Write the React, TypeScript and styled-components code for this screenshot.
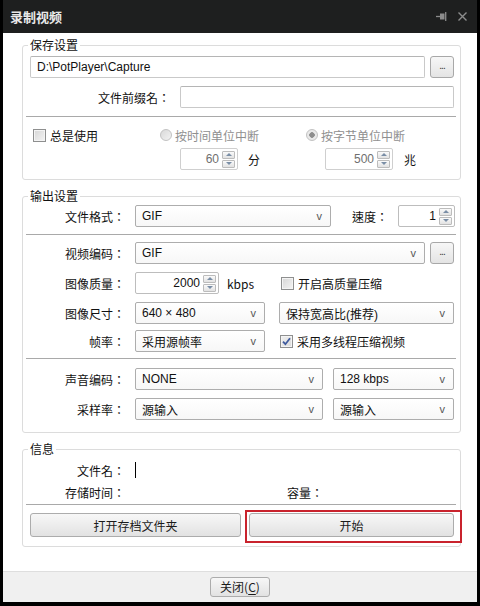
import styled, { createGlobalStyle } from 'styled-components'

const GlobalStyle = createGlobalStyle`
	html, body {
		margin: 0;
		padding: 0;
		background: #000;
	}
	body {
		font-family: "Noto Sans CJK SC", "Noto Sans", sans-serif;
		font-size: 12px;
		color: #1b1b1b;
	}
`

const Window = styled.div`
	width: 474px;
	height: 602px;
	margin-left: 3px;
	display: flex;
	flex-direction: column;
	background: #fff;
`

const TitleBar = styled.div`
	flex: none;
	height: 33px;
	display: flex;
	align-items: center;
	padding: 0 10px 0 7px;
	background: #1e1f1f;
	color: #e8e8e8;
	font-size: 13px;
	font-weight: bold;
`

const Title = styled.span`
	flex: 1;
`

const TitleIcons = styled.div`
	display: flex;
	align-items: center;
	gap: 11px;
	color: #8c8c8c;
	svg {
		display: block;
	}
`

const Body = styled.div`
	flex: 1;
	display: flex;
	flex-direction: column;
	padding: 12px 16px 0 19px;
`

const Group = styled.div<{ $mt?: number; $pt: number; $pb: number }>`
	position: relative;
	display: flex;
	flex-direction: column;
	margin-top: ${(p) => p.$mt ?? 0}px;
	padding: ${(p) => p.$pt}px 6px ${(p) => p.$pb}px 7px;
	border: 1px solid #dcdcdc;
	border-radius: 3px;
`

const Legend = styled.span`
	position: absolute;
	top: -9px;
	left: 5px;
	padding: 0 2px;
	background: #fff;
	line-height: 16px;
	color: #111;
`

const Separator = styled.div<{ $mt: number }>`
	height: 1px;
	margin: ${(p) => p.$mt}px -2px 0 -4px;
	background: #a9a9a9;
`

const Row = styled.div<{ $mt?: number; $h?: number }>`
	display: flex;
	align-items: center;
	height: ${(p) => p.$h ?? 22}px;
	margin-top: ${(p) => p.$mt ?? 0}px;
`

const ChoiceRow = styled(Row)`
	display: grid;
	grid-template-columns: 130px 146px 1fr;
	align-items: center;
`

// TC metrics keep the full-width colon centred in its cell
const Label = styled.span<{ $w: number }>`
	flex: none;
	width: ${(p) => p.$w}px;
	margin-right: 10px;
	text-align: right;
	white-space: nowrap;
	color: #111;
	font-family: "Noto Sans CJK TC", "Noto Sans CJK SC", sans-serif;
`

const Field = styled.div<{ $w?: number }>`
	box-sizing: border-box;
	height: 22px;
	${(p) => (p.$w ? `width: ${p.$w}px; flex: none;` : 'flex: 1;')}
	display: flex;
	align-items: center;
	padding: 0 6px;
	border: 1px solid #c9c9c9;
	border-top-color: #b5b5b5;
	border-radius: 2px;
	background: #fff;
	color: #111;
	font-family: "Liberation Sans", "Noto Sans CJK SC", sans-serif;
	white-space: nowrap;
`

const SelectBox = styled(Field)`
	justify-content: space-between;
	padding-right: 8px;
	border-color: #adadad;
	background: linear-gradient(#ffffff, #f7f7f7);
`

const Chevron = styled.span`
	font-family: "Liberation Sans", sans-serif;
	font-size: 11px;
	color: #555;
`

const SmallButton = styled.button`
	flex: none;
	box-sizing: border-box;
	width: 24px;
	height: 22px;
	margin-left: 5px;
	padding: 0 0 4px;
	border: 1px solid #a8a8a8;
	border-radius: 3px;
	background: linear-gradient(#f7f7f7, #e4e4e4);
	font-family: "Liberation Sans", sans-serif;
	font-size: 10px;
	color: #333;
	letter-spacing: -1px;
`

const PushButton = styled.button<{ $w?: number }>`
	box-sizing: border-box;
	height: 24px;
	${(p) => (p.$w ? `width: ${p.$w}px; flex: none;` : 'flex: 1;')}
	border: 1px solid #acacac;
	border-radius: 3px;
	background: linear-gradient(#f7f7f7, #e2e2e2);
	font-family: "Noto Sans CJK SC", sans-serif;
	font-size: 12px;
	color: #1b1b1b;
`

const Highlight = styled.div`
	position: relative;
	flex: 1;
	display: flex;
	margin-left: 8px;
`

const HighlightFrame = styled.span`
	position: absolute;
	inset: -3px -8px -6px -4px;
	border: 2px solid #c9232d;
	pointer-events: none;
`

const SpinBox = styled.div<{ $w: number; $disabled?: boolean }>`
	box-sizing: border-box;
	flex: none;
	width: ${(p) => p.$w}px;
	height: 22px;
	display: flex;
	align-items: center;
	padding: 0 2px 0 4px;
	border: 1px solid ${(p) => (p.$disabled ? '#cfcfcf' : '#bdbdbd')};
	border-radius: 2px;
	background: #fff;
	font-family: "Liberation Sans", sans-serif;
	color: ${(p) => (p.$disabled ? '#6f6f6f' : '#111')};
`

const SpinValue = styled.span`
	flex: 1;
	text-align: right;
	padding-right: 3px;
`

const SpinArrows = styled.div`
	display: flex;
	flex-direction: column;
	gap: 1px;
`

const SpinArrow = styled.span<{ $down?: boolean }>`
	box-sizing: border-box;
	width: 13px;
	height: 8px;
	display: flex;
	align-items: center;
	justify-content: center;
	border: 1px solid #bcbcbc;
	border-radius: 1px;
	background: linear-gradient(#fafafa, #e2e2e2);
	&::after {
		content: '';
		border-left: 3px solid transparent;
		border-right: 3px solid transparent;
		${(p) => (p.$down ? 'border-top: 3px solid #7a8ea6;' : 'border-bottom: 3px solid #7a8ea6;')}
	}
`

const Check = styled.span<{ $checked?: boolean }>`
	box-sizing: border-box;
	flex: none;
	width: 13px;
	height: 13px;
	margin-right: 4px;
	border: 1px solid #8e8f8f;
	background: ${(p) =>
		p.$checked ? 'linear-gradient(135deg, #f0f0f0, #dadada)' : 'linear-gradient(135deg, #d6d6d6, #f4f4f4)'};
	box-shadow: inset 0 0 0 1px #f4f4f4;
	display: flex;
	align-items: center;
	justify-content: center;
`

const Radio = styled.span<{ $on?: boolean }>`
	box-sizing: border-box;
	flex: none;
	width: 12px;
	height: 12px;
	margin-right: 3px;
	border-radius: 50%;
	border: 1px solid #c2c2c2;
	background: ${(p) =>
		p.$on
			? 'radial-gradient(circle, #8e8e8e 0 2.5px, #e9e9e9 3px)'
			: 'linear-gradient(135deg, #d9d9d9, #f3f3f3)'};
`

const Option = styled.label<{ $disabled?: boolean; $indent?: number }>`
	display: flex;
	align-items: center;
	margin-left: ${(p) => p.$indent ?? 0}px;
	color: ${(p) => (p.$disabled ? '#8f8f8f' : '#111')};
	white-space: nowrap;
`

const Cell = styled.div<{ $indent: number }>`
	display: flex;
	align-items: center;
	padding-left: ${(p) => p.$indent}px;
`

const Unit = styled.span<{ $ml: number }>`
	margin-left: ${(p) => p.$ml}px;
	color: #111;
`

const Caret = styled.span`
	width: 1px;
	height: 16px;
	background: #000;
`

const Spacer = styled.span<{ $w: number }>`
	flex: none;
	width: ${(p) => p.$w}px;
`

const Footer = styled.div`
	flex: none;
	height: 30px;
	display: flex;
	align-items: center;
	justify-content: center;
	border-top: 1px solid #dedede;
	background: #f0f0f0;
`

const CloseButton = styled(PushButton)`
	height: 20px;
	padding: 0;
	line-height: 16px;
	u {
		text-underline-offset: 2px;
	}
`

const Select = ({ value, w }: { value: string; w?: number }) => (
	<SelectBox $w={w}>
		<span>{value}</span>
		<Chevron>v</Chevron>
	</SelectBox>
)

const Spin = ({ value, w, disabled }: { value: string; w: number; disabled?: boolean }) => (
	<SpinBox $w={w} $disabled={disabled}>
		<SpinValue>{value}</SpinValue>
		<SpinArrows>
			<SpinArrow />
			<SpinArrow $down />
		</SpinArrows>
	</SpinBox>
)

const CheckMark = () => (
	<svg width="9" height="9" viewBox="0 0 9 9">
		<path d="M1 4.6 L3.4 7.2 L8 1.2" fill="none" stroke="#3f5b9e" strokeWidth="1.8" />
	</svg>
)

const PinIcon = () => (
	<svg width="11" height="9" viewBox="0 0 11 9">
		<path d="M0 4.5 H4" stroke="currentColor" strokeWidth="1.3" />
		<path d="M4 1.5 H8.5 V7.5 H4 Z" fill="currentColor" />
		<path d="M9.7 0 V9" stroke="currentColor" strokeWidth="1.3" />
	</svg>
)

const CloseIcon = () => (
	<svg width="9" height="9" viewBox="0 0 9 9">
		<path d="M0.5 0.5 L8.5 8.5 M8.5 0.5 L0.5 8.5" stroke="currentColor" strokeWidth="1.4" />
	</svg>
)

export default function App() {
	return (
		<>
			<GlobalStyle />
			<Window>
				<TitleBar>
					<Title>录制视频</Title>
					<TitleIcons>
						<PinIcon />
						<CloseIcon />
					</TitleIcons>
				</TitleBar>
				<Body>
					<Group $pt={10} $pb={9}>
						<Legend>保存设置</Legend>
						<Row>
							<Field>{'D:\\PotPlayer\\Capture'}</Field>
							<SmallButton>...</SmallButton>
						</Row>
						<Row $mt={8}>
							<Label $w={140}>文件前缀名：</Label>
							<Field />
						</Row>
						<Separator $mt={8} />
						<ChoiceRow $mt={9} $h={18}>
							<Option $indent={3}>
								<Check />
								总是使用
							</Option>
							<Option $disabled>
								<Radio />
								按时间单位中断
							</Option>
							<Option $disabled>
								<Radio $on />
								按字节单位中断
							</Option>
						</ChoiceRow>
						<ChoiceRow $mt={4}>
							<span />
							<Cell $indent={20}>
								<Spin value="60" w={58} disabled />
								<Unit $ml={10}>分</Unit>
							</Cell>
							<Cell $indent={19}>
								<Spin value="500" w={68} disabled />
								<Unit $ml={11}>兆</Unit>
							</Cell>
						</ChoiceRow>
					</Group>

					<Group $mt={16} $pt={8} $pb={12}>
						<Legend>输出设置</Legend>
						<Row>
							<Label $w={95}>文件格式：</Label>
							<Select value="GIF" w={196} />
							<Label $w={57}>速度：</Label>
							<Spin value="1" w={57} />
						</Row>
						<Separator $mt={7} />
						<Row $mt={7}>
							<Label $w={95}>视频编码：</Label>
							<Select value="GIF" />
							<SmallButton>...</SmallButton>
						</Row>
						<Row $mt={8}>
							<Label $w={95}>图像质量：</Label>
							<Spin value="2000" w={84} />
							<Unit $ml={8}>kbps</Unit>
							<Option $indent={27}>
								<Check />
								开启高质量压缩
							</Option>
						</Row>
						<Row $mt={8}>
							<Label $w={95}>图像尺寸：</Label>
							<Select value="640 × 480" w={130} />
							<Spacer $w={14} />
							<Select value="保持宽高比(推荐)" />
						</Row>
						<Row $mt={6}>
							<Label $w={95}>帧率：</Label>
							<Select value="采用源帧率" w={130} />
							<Option $indent={15}>
								<Check $checked>
									<CheckMark />
								</Check>
								采用多线程压缩视频
							</Option>
						</Row>
						<Separator $mt={6} />
						<Row $mt={9}>
							<Label $w={95}>声音编码：</Label>
							<Select value="NONE" w={188} />
							<Spacer $w={10} />
							<Select value="128 kbps" />
						</Row>
						<Row $mt={8}>
							<Label $w={95}>采样率：</Label>
							<Select value="源输入" w={188} />
							<Spacer $w={10} />
							<Select value="源输入" />
						</Row>
					</Group>

					<Group $mt={16} $pt={11} $pb={9}>
						<Legend>信息</Legend>
						<Row $h={18}>
							<Label $w={95}>文件名：</Label>
							<Caret />
						</Row>
						<Row $mt={4} $h={18}>
							<Label $w={95}>存储时间：</Label>
							<Spacer $w={152} />
							<Label $w={36}>容量：</Label>
						</Row>
						<Separator $mt={3} />
						<Row $mt={8} $h={24}>
							<PushButton $w={211}>打开存档文件夹</PushButton>
							<Highlight>
								<PushButton>开始</PushButton>
								<HighlightFrame />
							</Highlight>
						</Row>
					</Group>
				</Body>
				<Footer>
					<CloseButton $w={60}>
						关闭(<u>C</u>)
					</CloseButton>
				</Footer>
			</Window>
		</>
	)
}
